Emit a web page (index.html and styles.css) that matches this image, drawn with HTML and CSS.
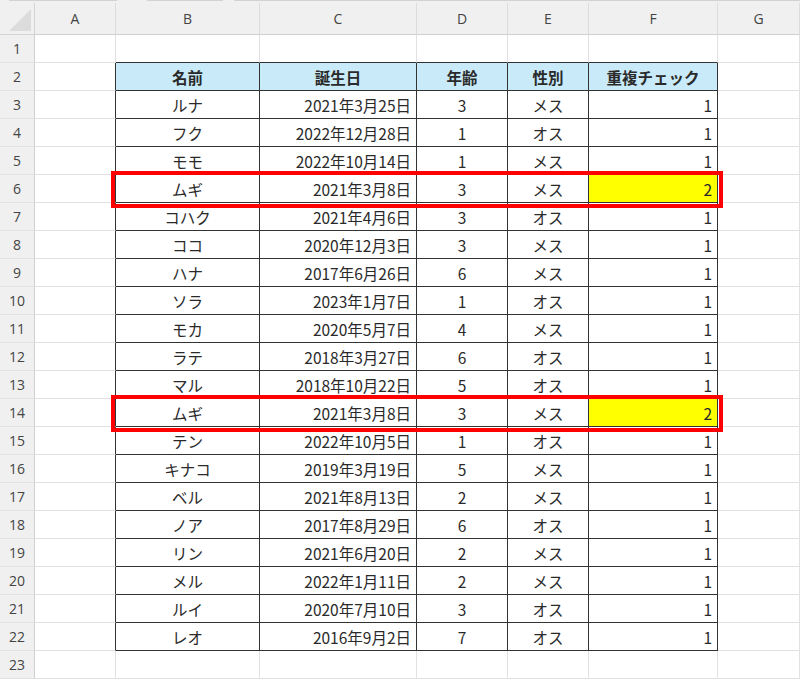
FILE: index.html
```html
<!DOCTYPE html>
<html lang="ja">
<head>
<meta charset="utf-8">
<title>重複チェック</title>
<link rel="stylesheet" href="styles.css">
</head>
<body>
<div class="topbar"><span class="tab tab1"></span><span class="tab tab2"></span><span class="tab tab3"></span></div>
<div class="sheet">
  <div class="grid">
    <div class="corner"><span class="tri"></span></div>
    <div class="ch">A</div><div class="ch">B</div><div class="ch">C</div><div class="ch">D</div><div class="ch">E</div><div class="ch">F</div><div class="ch">G</div>

    <div class="rh">1</div><div class="c"></div><div class="c tb"></div><div class="c tb"></div><div class="c tb"></div><div class="c tb"></div><div class="c tb"></div><div class="c"></div>

    <div class="rh">2</div><div class="c tl"></div><div class="c t th">名前</div><div class="c t th">誕生日</div><div class="c t th">年齢</div><div class="c t th">性別</div><div class="c t th">重複チェック</div><div class="c"></div>

    <div class="rh">3</div><div class="c tl"></div><div class="c t ctr">ルナ</div><div class="c t r">2021年3月25日</div><div class="c t ctr">3</div><div class="c t ctr">メス</div><div class="c t r">1</div><div class="c"></div>
    <div class="rh">4</div><div class="c tl"></div><div class="c t ctr">フク</div><div class="c t r">2022年12月28日</div><div class="c t ctr">1</div><div class="c t ctr">オス</div><div class="c t r">1</div><div class="c"></div>
    <div class="rh">5</div><div class="c tl"></div><div class="c t ctr">モモ</div><div class="c t r">2022年10月14日</div><div class="c t ctr">1</div><div class="c t ctr">メス</div><div class="c t r">1</div><div class="c"></div>
    <div class="rh">6</div><div class="c tl"></div><div class="c t ctr">ムギ</div><div class="c t r">2021年3月8日</div><div class="c t ctr">3</div><div class="c t ctr">メス</div><div class="c t r y">2</div><div class="c"></div>
    <div class="rh">7</div><div class="c tl"></div><div class="c t ctr">コハク</div><div class="c t r">2021年4月6日</div><div class="c t ctr">3</div><div class="c t ctr">オス</div><div class="c t r">1</div><div class="c"></div>
    <div class="rh">8</div><div class="c tl"></div><div class="c t ctr">ココ</div><div class="c t r">2020年12月3日</div><div class="c t ctr">3</div><div class="c t ctr">メス</div><div class="c t r">1</div><div class="c"></div>
    <div class="rh">9</div><div class="c tl"></div><div class="c t ctr">ハナ</div><div class="c t r">2017年6月26日</div><div class="c t ctr">6</div><div class="c t ctr">メス</div><div class="c t r">1</div><div class="c"></div>
    <div class="rh">10</div><div class="c tl"></div><div class="c t ctr">ソラ</div><div class="c t r">2023年1月7日</div><div class="c t ctr">1</div><div class="c t ctr">オス</div><div class="c t r">1</div><div class="c"></div>
    <div class="rh">11</div><div class="c tl"></div><div class="c t ctr">モカ</div><div class="c t r">2020年5月7日</div><div class="c t ctr">4</div><div class="c t ctr">メス</div><div class="c t r">1</div><div class="c"></div>
    <div class="rh">12</div><div class="c tl"></div><div class="c t ctr">ラテ</div><div class="c t r">2018年3月27日</div><div class="c t ctr">6</div><div class="c t ctr">オス</div><div class="c t r">1</div><div class="c"></div>
    <div class="rh">13</div><div class="c tl"></div><div class="c t ctr">マル</div><div class="c t r">2018年10月22日</div><div class="c t ctr">5</div><div class="c t ctr">オス</div><div class="c t r">1</div><div class="c"></div>
    <div class="rh">14</div><div class="c tl"></div><div class="c t ctr">ムギ</div><div class="c t r">2021年3月8日</div><div class="c t ctr">3</div><div class="c t ctr">メス</div><div class="c t r y">2</div><div class="c"></div>
    <div class="rh">15</div><div class="c tl"></div><div class="c t ctr">テン</div><div class="c t r">2022年10月5日</div><div class="c t ctr">1</div><div class="c t ctr">オス</div><div class="c t r">1</div><div class="c"></div>
    <div class="rh">16</div><div class="c tl"></div><div class="c t ctr">キナコ</div><div class="c t r">2019年3月19日</div><div class="c t ctr">5</div><div class="c t ctr">メス</div><div class="c t r">1</div><div class="c"></div>
    <div class="rh">17</div><div class="c tl"></div><div class="c t ctr">ベル</div><div class="c t r">2021年8月13日</div><div class="c t ctr">2</div><div class="c t ctr">メス</div><div class="c t r">1</div><div class="c"></div>
    <div class="rh">18</div><div class="c tl"></div><div class="c t ctr">ノア</div><div class="c t r">2017年8月29日</div><div class="c t ctr">6</div><div class="c t ctr">オス</div><div class="c t r">1</div><div class="c"></div>
    <div class="rh">19</div><div class="c tl"></div><div class="c t ctr">リン</div><div class="c t r">2021年6月20日</div><div class="c t ctr">2</div><div class="c t ctr">メス</div><div class="c t r">1</div><div class="c"></div>
    <div class="rh">20</div><div class="c tl"></div><div class="c t ctr">メル</div><div class="c t r">2022年1月11日</div><div class="c t ctr">2</div><div class="c t ctr">メス</div><div class="c t r">1</div><div class="c"></div>
    <div class="rh">21</div><div class="c tl"></div><div class="c t ctr">ルイ</div><div class="c t r">2020年7月10日</div><div class="c t ctr">3</div><div class="c t ctr">オス</div><div class="c t r">1</div><div class="c"></div>
    <div class="rh">22</div><div class="c tl"></div><div class="c t ctr">レオ</div><div class="c t r">2016年9月2日</div><div class="c t ctr">7</div><div class="c t ctr">オス</div><div class="c t r">1</div><div class="c"></div>
    <div class="rh">23</div><div class="c"></div><div class="c"></div><div class="c"></div><div class="c"></div><div class="c"></div><div class="c"></div><div class="c"></div>
  </div>
  <div class="mark mark-6"></div>
  <div class="mark mark-14"></div>
</div>
</body>
</html>
```
FILE: styles.css
```css
html, body {
  margin: 0;
  padding: 0;
  background: #ffffff;
  overflow: hidden;
}

.topbar {
  height: 3px;
  background: #f0f0f0;
  position: relative;
}

.tab {
  position: absolute;
  top: 0;
  height: 1px;
  background: #d2d2d2;
}
.tab1 { left: 9px; width: 108px; }
.tab2 { left: 147px; width: 76px; }
.tab3 { left: 234px; width: 566px; }

.sheet {
  position: relative;
}

.grid {
  display: grid;
  grid-template-columns: 35px 81px 144px 157px 91px 81px 129px 82px;
  grid-template-rows: 32px;
  grid-auto-rows: 28px;
}

.grid > div {
  box-sizing: border-box;
}

.corner {
  background: #f0f0f0;
  border-right: 1px solid #d4d4d4;
  border-bottom: 1px solid #d4d4d4;
  position: relative;
}

.tri {
  position: absolute;
  right: 3px;
  bottom: 3px;
  width: 0;
  height: 0;
  border-left: 22px solid transparent;
  border-bottom: 22px solid #dcdcdc;
}

.ch {
  background: #f0f0f0;
  border-right: 1px solid #dcdcdc;
  border-bottom: 1px solid #d0d0d0;
  font-family: "Open Sans", "Noto Sans", sans-serif;
  font-size: 14px;
  color: #444;
  display: flex;
  align-items: center;
  justify-content: center;
}

.rh {
  background: #f0f0f0;
  border-right: 1px solid #d0d0d0;
  border-bottom: 1px solid #e2e2e2;
  font-family: "Open Sans", "Noto Sans", sans-serif;
  font-size: 14px;
  color: #444;
  display: flex;
  align-items: center;
  justify-content: center;
}

.c {
  border-right: 1px solid #e1e1e1;
  border-bottom: 1px solid #e1e1e1;
  font-family: "Noto Sans CJK JP", "Noto Sans", sans-serif;
  font-size: 15.5px;
  color: #2a2a2a;
  display: flex;
  align-items: center;
  padding: 0 5px;
  white-space: nowrap;
}

.c.tb { border-bottom-color: #333; }
.c.tl { border-right-color: #333; }
.c.t {
  border-right-color: #333;
  border-bottom-color: #333;
}

.th {
  background: #c9ebf9;
  font-weight: bold;
  justify-content: center;
}

.ctr { justify-content: center; }
.r { justify-content: flex-end; }
.y { background: #ffff00; }

.mark {
  position: absolute;
  left: 111px;
  width: 612px;
  height: 37px;
  box-sizing: border-box;
  border: 4px solid #ff0000;
}
.mark-6 { top: 168px; }
.mark-14 { top: 392px; }
```
